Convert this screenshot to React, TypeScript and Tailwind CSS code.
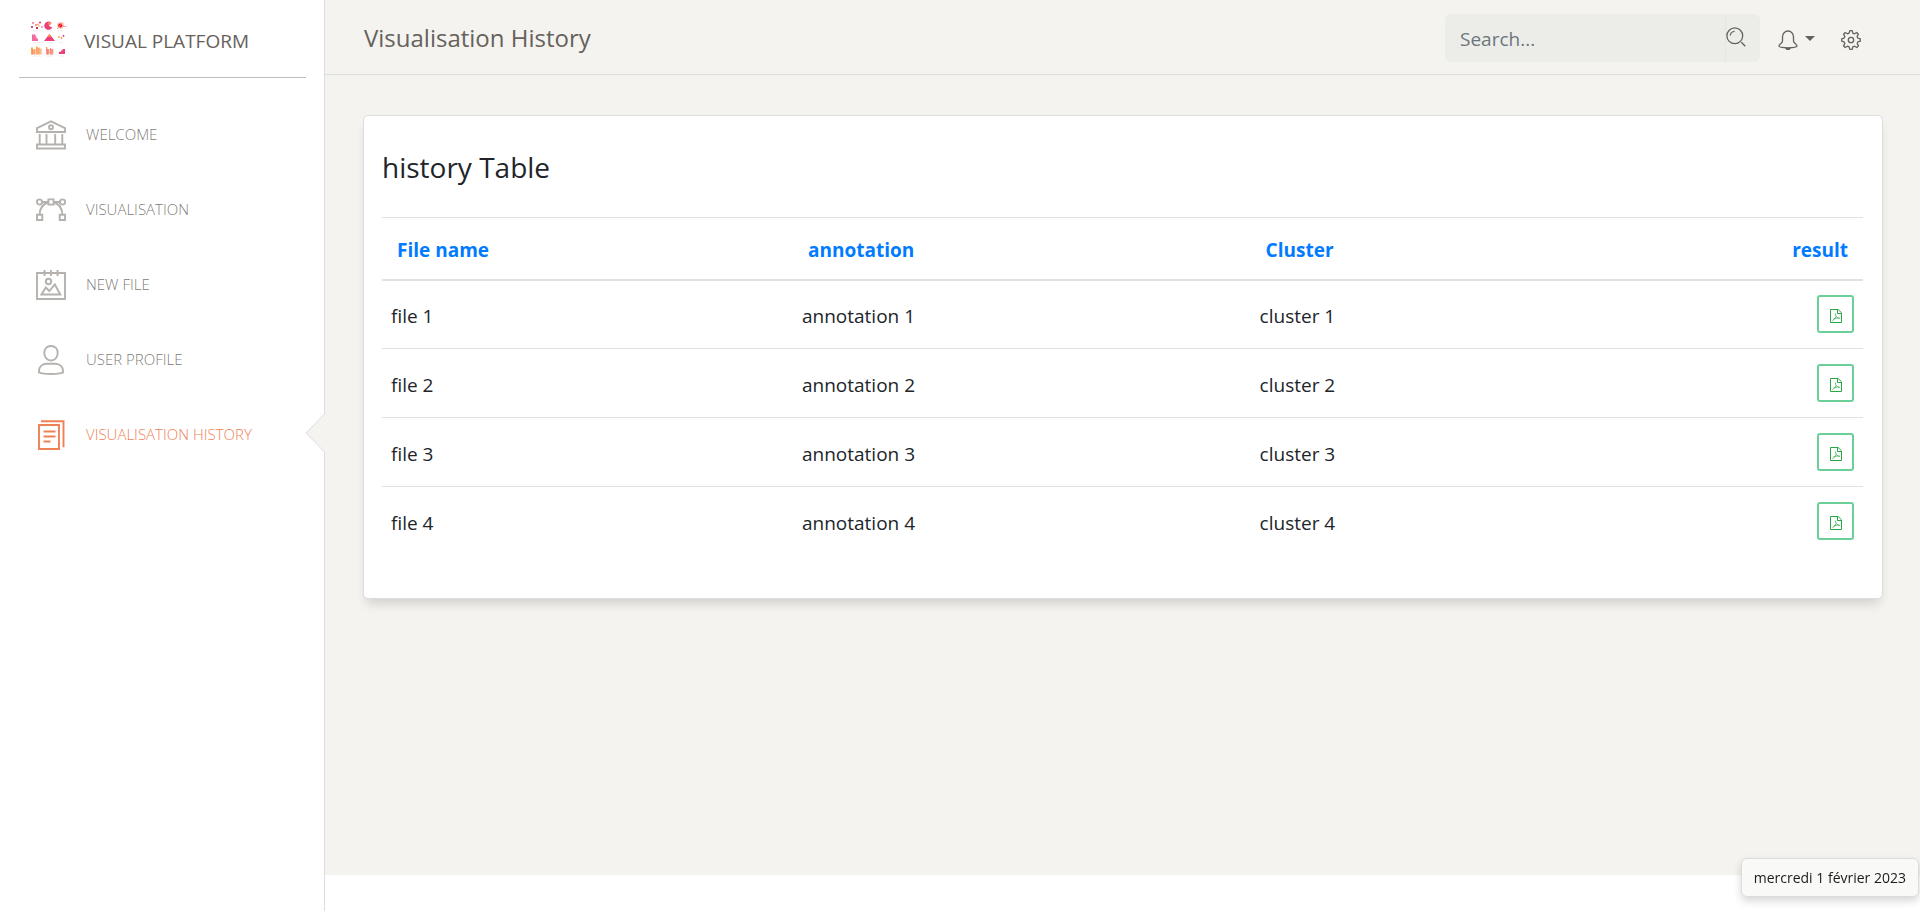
import type { ReactNode } from "react";

type IconProps = { className?: string };

function Logo() {
  return (
    <svg viewBox="0 0 38 38" className="h-[38px] w-[38px] shrink-0" aria-hidden="true">
      <g fill="#d81b60">
        <circle cx="3" cy="3" r="0.8" />
        <circle cx="6" cy="5" r="0.8" />
        <circle cx="2" cy="7" r="0.9" fill="#b0003a" />
        <circle cx="7" cy="8" r="1.1" fill="#b0003a" />
        <circle cx="10" cy="2.500" r="0.9" />
        <circle cx="12" cy="7" r="0.7" />
        <circle cx="4" cy="2.500" r="0.6" fill="#ff9a8a" />
        <circle cx="8" cy="4.500" r="0.9" fill="#ff9d3c" />
        <circle cx="9" cy="6" r="0.8" fill="#ffa040" />
      </g>
      <path d="M21.500 2.800A4.200 4.200 0 1 0 22.200 7.500L18.700 5.800Z" fill="#ec407a" />
      <path d="M17.500 3.500l2-1.700 2 1.500-1.500 2z" fill="#ff8a65" />
      <circle cx="30.500" cy="5.500" r="3.300" fill="#ff8a80" opacity="0.6" />
      <circle cx="30.300" cy="5.500" r="2" fill="#e5141c" />
      <path d="M27 9l6-6.500M32.500 6l4 .7" stroke="#ff8a80" strokeWidth="0.8" />
      <path d="M2 14.500h3.500v2h1v2h1.500v2.500H2z" fill="#f06ba0" />
      <path d="M14 21l5.500-7 5.500 7z" fill="#ec407a" />
      <path d="M17.300 16.700l2.200-2.700 2.200 2.700z" fill="#ff9152" />
      <circle cx="29" cy="17" r="0.9" fill="#ffa040" />
      <circle cx="31.500" cy="18" r="0.9" fill="#ff8a65" />
      <circle cx="33.500" cy="15.800" r="0.9" fill="#d81b60" />
      <path d="M1 27.500h2v7H1zM3.500 29h2v5.500h-2zM6 26.500h1.700v8H6zM8.500 27.500h1.300v7H8.500zM10.300 28.500h1.200v6h-1.200z" fill="#ffa24f" />
      <path d="M3 30v4.500M8.200 28v6.500" stroke="#f0647a" strokeWidth="0.7" />
      <path d="M16 27h1.300v7.500H16zM17.800 29h1.500v5.500h-1.500zM19.800 28h1.300v6.500h-1.300zM21.600 29h1.700v5.500h-1.700z" fill="#ff9470" />
      <path d="M17.500 29v5.500M21.200 29v5.500" stroke="#ec5a86" strokeWidth="0.7" />
      <path d="M29 34v-2.200h2v-1.300h1.500V29H35v5z" fill="#ec407a" />
      <path d="M3 10.300h8M16 11h7M28 10.800h5M3 22.500h8M16 22.500h7M29 22.500h4M3 36h8M16 36h7M29 36h5" stroke="#eeeeee" strokeWidth="1" />
    </svg>
  );
}

function BankIcon() {
  return (
    <svg viewBox="0 0 30 30" className="h-[30px] w-[30px]" fill="none" stroke="currentColor" strokeWidth="1.900" aria-hidden="true">
      <path d="M1 8.200L15 1.300l14 6.900V12H1z" />
      <circle cx="15" cy="7.300" r="2" />
      <path d="M3.700 14v10M10.500 14v10M19.200 14v10M26.300 14v10" />
      <path d="M1 24.500h28v4H1z" />
    </svg>
  );
}

function VectorIcon() {
  return (
    <svg viewBox="0 0 30 30" className="h-[30px] w-[30px]" fill="none" stroke="currentColor" strokeWidth="1.900" aria-hidden="true">
      <circle cx="3.500" cy="7" r="2.600" />
      <circle cx="26.500" cy="7" r="2.600" />
      <path d="M12.400 4.400h5.200v5.200h-5.200z" />
      <path d="M6.200 7h6M17.800 7h6" />
      <path d="M1 19.700h5.300V25H1zM23.700 19.700H29V25h-5.300z" />
      <path d="M3.700 19.500c0-6.500 3.600-10.500 8.600-12M26.300 19.500c0-6.500-3.600-10.500-8.600-12" />
    </svg>
  );
}

function AlbumIcon() {
  return (
    <svg viewBox="0 0 30 30" className="h-[30px] w-[30px]" fill="none" stroke="currentColor" strokeWidth="1.900" aria-hidden="true">
      <path d="M1 3h28v26H1zM8.500 0v6M15 0v6M21.500 0v6" />
      <circle cx="12.500" cy="11.500" r="2.700" />
      <path d="M5.500 24.500l4.300-7 3.500 3.500 5.500-6.500 5.500 10z" />
    </svg>
  );
}

function UserIcon() {
  return (
    <svg viewBox="0 0 30 30" className="h-[30px] w-[30px]" fill="none" stroke="currentColor" strokeWidth="1.900" aria-hidden="true">
      <path d="M15 15.500c-3.800 0-6.700-3.300-6.700-7.500S11 1 15 1s6.700 2.800 6.700 7-2.900 7.500-6.700 7.500z" />
      <path d="M27 27.500S23.500 29 15 29 3 27.500 3 27.500V26c0-4 3-7 7.500-7.300h9C24 19 27 22 27 26z" />
    </svg>
  );
}

function PaperIcon() {
  return (
    <svg viewBox="0 0 30 30" className="h-[30px] w-[30px]" fill="none" stroke="currentColor" strokeWidth="1.900" aria-hidden="true">
      <path d="M3 5h20v24H3z" />
      <path d="M5 1.200h22.500v26" />
      <path d="M7.500 11.500h12M7.500 16.500h12M7.500 21.500h7" />
    </svg>
  );
}

function SearchIcon() {
  return (
    <svg viewBox="0 0 20 20" className="h-5 w-5" fill="none" stroke="currentColor" strokeWidth="1.300" aria-hidden="true">
      <circle cx="8.800" cy="8.800" r="7.900" />
      <path d="M4.300 8.600a4.400 4.400 0 0 1 4.300-4.300M15.300 15.300l4 4" />
    </svg>
  );
}

function BellIcon() {
  return (
    <svg viewBox="0 0 20 20" className="h-5 w-5" fill="none" stroke="currentColor" strokeWidth="1.300" aria-hidden="true">
      <path d="M15.500 11V6.800C15.500 3.600 13 1 10 1S4.500 3.600 4.500 6.800V11c0 2.500-3.500 3-3.500 5 0 1.200 3.600 1.800 9 1.800s9-.6 9-1.800c0-2-3.500-2.500-3.500-5z" />
      <path d="M7.300 17.700h5.400c0 1.400-1 2.300-2.700 2.300s-2.700-.9-2.700-2.300z" fill="currentColor" stroke="none" />
    </svg>
  );
}

function GearIcon() {
  return (
    <svg viewBox="0 0 20 20" className="h-5 w-5" fill="none" stroke="currentColor" strokeWidth="1.300" strokeLinejoin="round" aria-hidden="true">
      <circle cx="10" cy="10" r="2.700" />
      <path d="M19.300 11.200V8.800l-2.500-.7-.7-1.700 1.300-2.200-1.700-1.700-2.200 1.300-1.700-.7L11.200.7H8.800l-.7 2.400-1.700.7-2.200-1.300-1.700 1.700 1.300 2.200-.7 1.700-2.400.7v2.400l2.400.7.7 1.700-1.300 2.200 1.700 1.700 2.200-1.300 1.700.7.7 2.400h2.400l.6-2.400 1.700-.7 2.300 1.300 1.700-1.700-1.300-2.200.6-1.700z" />
    </svg>
  );
}

function PdfIcon({ className }: IconProps) {
  return (
    <svg viewBox="0 0 12 14" className={className} fill="none" stroke="currentColor" aria-hidden="true">
      <path d="M.5.500h7.700l3.300 3.300v9.700H.5z" />
      <path d="M7.500.500v4h4" />
      <path d="M5.500 4.500c-.3 2 .7 4 4.200 5M6 7.500C5.500 9 4 11 2.300 11.800M3.500 10c2-.9 4-1.200 6.200-.9" strokeWidth="0.900" opacity="0.800" />
    </svg>
  );
}

type NavItem = { label: string; icon: ReactNode; active?: boolean };

const navItems: NavItem[] = [
  { label: "WELCOME", icon: <BankIcon /> },
  { label: "VISUALISATION", icon: <VectorIcon /> },
  { label: "NEW FILE", icon: <AlbumIcon /> },
  { label: "USER PROFILE", icon: <UserIcon /> },
  { label: "VISUALISATION HISTORY", icon: <PaperIcon />, active: true },
];

const rows = [1, 2, 3, 4].map((n) => ({
  file: `file ${n}`,
  annotation: `annotation ${n}`,
  cluster: `cluster ${n}`,
}));

function Sidebar() {
  return (
    <aside className="w-[325px] shrink-0 border-r border-[#dddddd] bg-white">
      <div className="mr-[18px] ml-[19px] flex h-[78px] items-center border-b border-[#bdbdbd] pl-[11px]">
        <a href="#home" className="flex items-center gap-4 text-[19px] text-[#66615b]">
          <Logo />
          <span className="pt-1.5">VISUAL PLATFORM</span>
        </a>
      </div>
      <nav className="pt-[19px]">
        <ul>
          {navItems.map((item) => (
            <li key={item.label} className="relative">
              <a
                href="#page"
                aria-current={item.active ? "page" : undefined}
                className={
                  item.active
                    ? "flex h-[75px] items-center gap-5 pl-9 text-[15px] font-light text-[#ef8157]"
                    : "flex h-[75px] items-center gap-5 pl-9 text-[15px] font-light text-[#66615b]/85"
                }
              >
                <span className={item.active ? "" : "text-[#b5b1ad]"}>{item.icon}</span>
                {item.label}
              </a>
              {item.active && (
                <svg viewBox="0 0 20 40" className="absolute top-4 -right-px h-10 w-5" aria-hidden="true">
                  <path d="M20 .5L1 20l19 19.500z" fill="#f4f3ef" />
                  <path d="M19.500 1L1 20l18.500 19" fill="none" stroke="#dddddd" />
                </svg>
              )}
            </li>
          ))}
        </ul>
      </nav>
    </aside>
  );
}

function TopBar() {
  return (
    <header className="flex h-[75px] items-center border-b border-[#dddddd] pt-0.5 pr-[59px] pl-[39px] text-[#66615b]">
      <h1 className="flex-1 text-2xl">Visualisation History</h1>
      <form className="flex h-12 w-[315px] overflow-hidden rounded-md bg-[#ecede8]">
        <input
          type="text"
          aria-label="Search"
          placeholder="Search..."
          className="min-w-0 flex-1 bg-transparent pt-0.5 pl-[15px] text-[19px] outline-none placeholder:text-[#6c757d]"
        />
        <button type="button" aria-label="Search" className="flex w-[35px] items-center border-l border-[#e6e7e2] pb-0.5">
          <SearchIcon />
        </button>
      </form>
      <button type="button" aria-label="Notifications" className="ml-[18px] flex items-center gap-[7px] pt-1">
        <BellIcon />
        <svg viewBox="0 0 10 5" className="mb-1 h-[5px] w-2.5" aria-hidden="true">
          <path d="M0 0h10L5 5z" fill="currentColor" />
        </svg>
      </button>
      <button type="button" aria-label="Settings" className="ml-[26px] pt-1">
        <GearIcon />
      </button>
    </header>
  );
}

function HistoryCard() {
  return (
    <section className="rounded-[5px] border border-[#dddddd] bg-white pt-7 pr-[19px] pb-[42px] pl-[18px] shadow-[0_8px_12px_-4px_rgba(0,0,0,0.16)]">
      <h2 className="text-[28px] leading-[46px] text-[#212529]">history Table</h2>
      <table className="mt-[27px] w-full border-collapse text-[19px] text-[#212529]">
        <thead>
          <tr className="h-[62px] border-t border-b-2 border-t-[#dee2e6] border-b-[#dee2e6] text-left text-[#007bff]">
            <th className="w-[27.75%] px-[15px] pt-1">File name</th>
            <th className="w-[30.9%] px-[15px] pt-1">annotation</th>
            <th className="px-[15px] pt-1">Cluster</th>
            <th className="px-[15px] pt-1 text-right">result</th>
          </tr>
        </thead>
        <tbody>
          {rows.map((row) => (
            <tr key={row.file} className="h-[69px] border-b border-[#dee2e6] last:border-b-0">
              <td className="px-[9px] pt-1">{row.file}</td>
              <td className="px-[9px] pt-1">{row.annotation}</td>
              <td className="px-[9px] pt-1">{row.cluster}</td>
              <td className="px-[9px]">
                <button
                  type="button"
                  aria-label={`Open PDF result for ${row.file}`}
                  className="ml-auto flex h-[38px] w-[37px] items-center justify-center rounded-[3px] border-2 border-[#6bd098] pt-[3px] text-[#28a745]"
                >
                  <PdfIcon className="h-3.5 w-3" />
                </button>
              </td>
            </tr>
          ))}
        </tbody>
      </table>
    </section>
  );
}

export default function App() {
  return (
    <div className="flex min-h-screen bg-white font-['Open_Sans','Noto_Sans',sans-serif]">
      <Sidebar />
      <div className="flex min-w-0 flex-1 flex-col pb-9">
        <div className="flex-1 bg-[#f4f3ef]">
          <TopBar />
          <main className="pt-10 pr-[37px] pb-10 pl-[38px]">
            <HistoryCard />
          </main>
        </div>
      </div>
      <div
        role="tooltip"
        className="fixed right-px bottom-[14px] flex h-[39px] items-center rounded-md border border-[#dcdcdc] bg-[#f9f9f8] px-3 text-sm text-[#1b1b1b] shadow-[0_4px_8px_rgba(0,0,0,0.16)]"
      >
        mercredi 1 février 2023
      </div>
    </div>
  );
}
